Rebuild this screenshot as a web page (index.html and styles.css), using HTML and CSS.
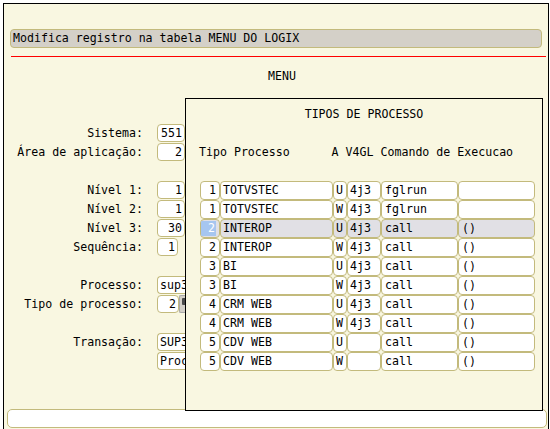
FILE: index.html
```html
<!DOCTYPE html>
<html lang="pt">
<head>
<meta charset="utf-8">
<title>Modifica registro na tabela MENU DO LOGIX</title>
<link rel="stylesheet" href="styles.css">
</head>
<body>
<div class="frame">
  <div class="titlebar">Modifica registro na tabela MENU DO LOGIX</div>
  <div class="redline"></div>
  <div class="form">
    <div class="row heading">MENU</div>
    <div class="row"></div>
    <div class="row"></div>
    <div class="row"><span class="lbl">Sistema:</span><span class="fld num w28">551</span></div>
    <div class="row"><span class="lbl">Área de aplicação:</span><span class="fld num w28">2</span></div>
    <div class="row"></div>
    <div class="row"><span class="lbl">Nível 1:</span><span class="fld num w28">1</span></div>
    <div class="row"><span class="lbl">Nível 2:</span><span class="fld num w28">1</span></div>
    <div class="row"><span class="lbl">Nível 3:</span><span class="fld num w28">30</span></div>
    <div class="row"><span class="lbl">Sequência:</span><span class="fld num w21">1</span></div>
    <div class="row"></div>
    <div class="row"><span class="lbl">Processo:</span><span class="fld txt wide">sup3</span></div>
    <div class="row"><span class="lbl">Tipo de processo:</span><span class="fldgroup"><span class="fld num w22">2</span><span class="btn"><span class="btn-ico"></span></span></span></div>
    <div class="row"></div>
    <div class="row"><span class="lbl">Transação:</span><span class="fld txt wide">SUP3</span></div>
    <div class="row"><span class="lbl"></span><span class="fld txt wide">Proc</span></div>
    <div class="row"></div>
    <div class="row"></div>
  </div>
  <div class="status"></div>

  <div class="popup">
    <div class="prow ptitle">TIPOS DE PROCESSO</div>
    <div class="prow"></div>
    <div class="prow phead">Tipo Processo      A V4GL Comando de Execucao</div>
    <div class="prow"></div>
    <div class="ptable">
      <div class="trow"><span class="cell c1">1</span><span class="cell c2">TOTVSTEC</span><span class="cell c3">U</span><span class="cell c4">4j3</span><span class="cell c5">fglrun</span><span class="cell c6"></span></div>
      <div class="trow"><span class="cell c1">1</span><span class="cell c2">TOTVSTEC</span><span class="cell c3">W</span><span class="cell c4">4j3</span><span class="cell c5">fglrun</span><span class="cell c6"></span></div>
      <div class="trow sel"><span class="cell c1"><span class="hl">2</span></span><span class="cell c2">INTEROP</span><span class="cell c3">U</span><span class="cell c4">4j3</span><span class="cell c5">call</span><span class="cell c6">()</span></div>
      <div class="trow"><span class="cell c1">2</span><span class="cell c2">INTEROP</span><span class="cell c3">W</span><span class="cell c4">4j3</span><span class="cell c5">call</span><span class="cell c6">()</span></div>
      <div class="trow"><span class="cell c1">3</span><span class="cell c2">BI</span><span class="cell c3">U</span><span class="cell c4">4j3</span><span class="cell c5">call</span><span class="cell c6">()</span></div>
      <div class="trow"><span class="cell c1">3</span><span class="cell c2">BI</span><span class="cell c3">W</span><span class="cell c4">4j3</span><span class="cell c5">call</span><span class="cell c6">()</span></div>
      <div class="trow"><span class="cell c1">4</span><span class="cell c2">CRM WEB</span><span class="cell c3">U</span><span class="cell c4">4j3</span><span class="cell c5">call</span><span class="cell c6">()</span></div>
      <div class="trow"><span class="cell c1">4</span><span class="cell c2">CRM WEB</span><span class="cell c3">W</span><span class="cell c4">4j3</span><span class="cell c5">call</span><span class="cell c6">()</span></div>
      <div class="trow"><span class="cell c1">5</span><span class="cell c2">CDV WEB</span><span class="cell c3">U</span><span class="cell c4"></span><span class="cell c5">call</span><span class="cell c6">()</span></div>
      <div class="trow"><span class="cell c1">5</span><span class="cell c2">CDV WEB</span><span class="cell c3">W</span><span class="cell c4"></span><span class="cell c5">call</span><span class="cell c6">()</span></div>
    </div>
  </div>
</div>
</body>
</html>
```
FILE: styles.css
```css
* { box-sizing: border-box; }
html, body {
  margin: 0;
  padding: 0;
  background: #ffffff;
  overflow: hidden;
}
body {
  font-family: "DejaVu Sans Mono", "Liberation Mono", monospace;
  font-size: 11.6px;
  color: #000;
}
.frame {
  position: relative;
  margin: 3px 0 0 3px;
  width: 546px;
  height: 426px;
  border: 1px solid #000;
  border-bottom: none;
  background: #f9f7e1;
  padding-top: 25px;
  overflow: hidden;
}
.titlebar {
  margin-left: 6px;
  width: 532px;
  height: 19px;
  background: #d4d0c8;
  border: 1px solid #c3ba7c;
  border-radius: 4px;
  padding-left: 2px;
  line-height: 17px;
  white-space: pre;
}
.redline {
  margin: 8px 0 0 7px;
  width: 535px;
  height: 1px;
  background: #ff0000;
}
.form {
  margin-top: 10px;
}
.row {
  height: 19px;
  display: grid;
  grid-template-columns: 139px auto;
  column-gap: 14px;
  align-items: start;
}
.heading {
  display: block;
  padding-left: 264px;
  line-height: 19px;
}
.lbl {
  text-align: right;
  line-height: 19px;
  white-space: pre;
}
.fld {
  height: 18px;
  background: #fff;
  border: 1px solid #c3ba7c;
  border-radius: 4px;
  line-height: 16px;
  white-space: pre;
  overflow: hidden;
}
.num { text-align: right; padding: 0 2px; }
.txt { text-align: left; padding: 0 2px; }
.w28 { width: 28px; }
.w21 { width: 21px; }
.w22 { width: 22px; }
.wide { width: 29px; border-right: none; border-radius: 4px 0 0 4px; }
.fldgroup {
  display: flex;
}
.btn {
  display: block;
  width: 7px;
  height: 18px;
  background: #d4d0c8;
  border: 1px solid #a8a8a8;
  border-right: none;
  border-radius: 2px 0 0 2px;
  padding: 2px 0 0 2px;
}
.btn-ico {
  display: block;
  width: 5px;
  height: 7px;
  background: #4a4a4a;
  border-radius: 1px 0 0 1px;
}
.status {
  margin-left: 3px;
  width: 540px;
  height: 19px;
  background: #fff;
  border: 1px solid #c3ba7c;
  border-radius: 5px;
}
.popup {
  position: absolute;
  left: 181px;
  top: 94px;
  width: 358px;
  height: 313px;
  border: 1px solid #000;
  background: #f9f7e1;
  padding-top: 6px;
}
.prow {
  height: 19px;
  line-height: 19px;
  white-space: pre;
}
.ptitle { text-align: center; }
.phead { padding-left: 13px; }
.ptable {
  margin-left: 14px;
}
.trow {
  display: flex;
  height: 19px;
}
.cell {
  display: block;
  height: 19px;
  background: #fff;
  border: 1px solid #c3ba7c;
  border-radius: 4px;
  line-height: 17px;
  padding: 0 2px;
  white-space: pre;
  overflow: hidden;
}
.c1 { width: 20px; text-align: right; padding-right: 3px; }
.c2 { width: 113px; }
.c3 { width: 14px; padding: 0 1px 0 2px; }
.c4 { width: 34px; }
.c5 { width: 77px; padding-left: 3px; }
.c6 { width: 77px; padding-left: 3px; }
.sel .cell { background: #e1e0e5; }
.sel .c1 { padding-left: 0; }
.hl {
  display: block;
  height: 15px;
  margin-top: 1px;
  line-height: 15px;
  background: #a6c6f0;
  color: #fff;
  text-align: right;
  padding-right: 1px;
}
```
